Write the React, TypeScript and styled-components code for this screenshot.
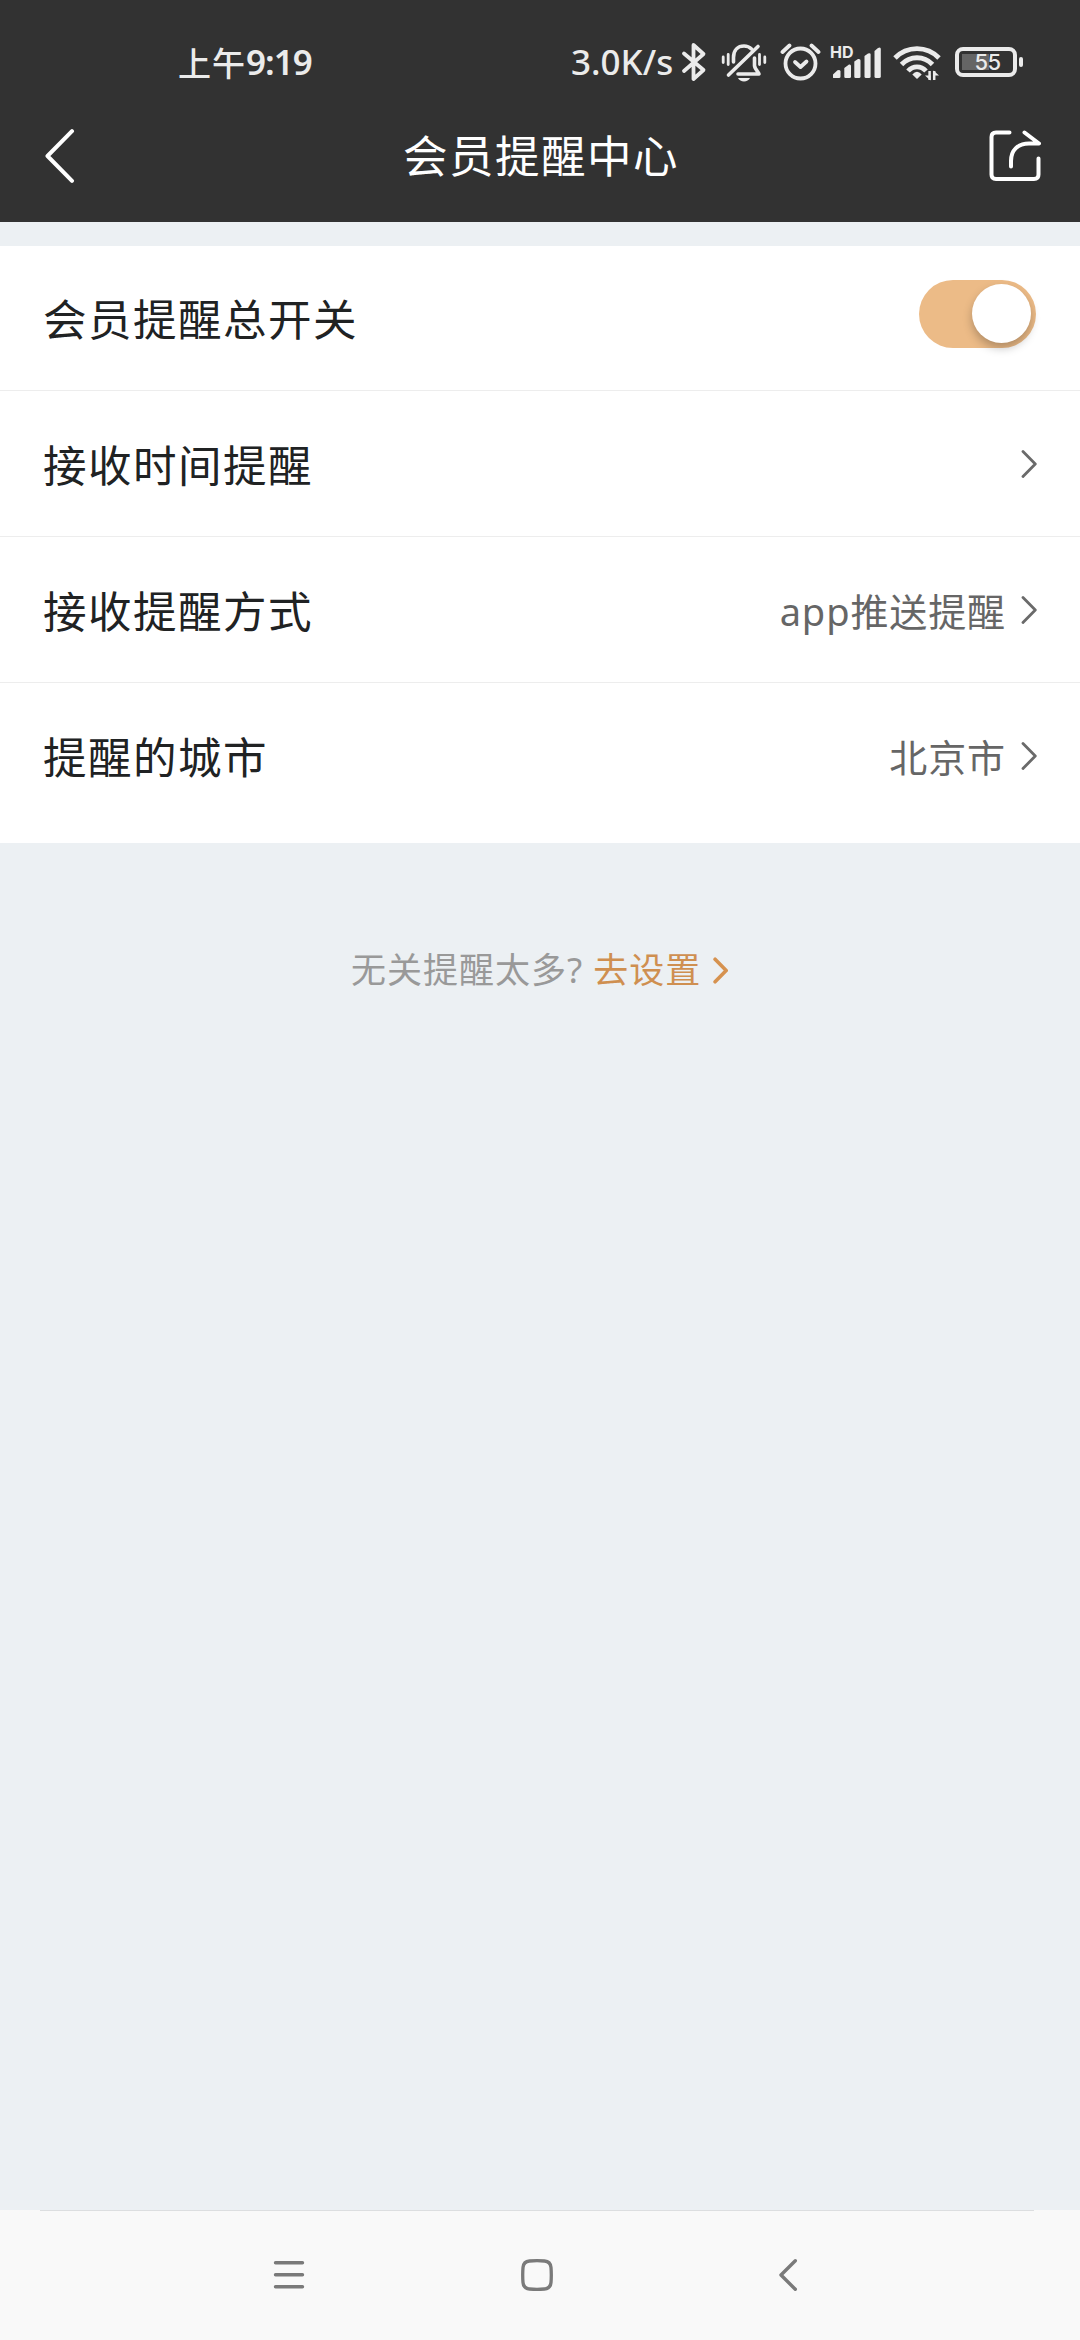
import React from "react";
import styled, { createGlobalStyle } from "styled-components";

const GlobalStyle = createGlobalStyle`
  *, *::before, *::after { box-sizing: border-box; }
  body { margin: 0; background: #ecf0f3; }
  svg { display: block; flex: none; }
  button { margin: 0; padding: 0; border: 0; background: none; font: inherit; color: inherit; }
`;

const Screen = styled.div`
  width: 1080px;
  height: 2340px;
  display: flex;
  flex-direction: column;
  overflow: hidden;
  background: #ecf0f3;
  font-family: "Noto Sans", "Noto Sans CJK SC", sans-serif;
  white-space: nowrap;
`;

const Header = styled.header`
  height: 222px;
  background: #323232;
  color: #fff;
`;

const StatusBar = styled.div`
  display: flex;
  align-items: center;
  justify-content: space-between;
  height: 90px;
  padding: 34px 57px 0 178px;
  color: #ebebeb;
  font-weight: 500;
  line-height: 56px;
`;

const Clock = styled.div`
  display: flex;
  font-size: 34px;
`;

const ClockPeriod = styled.span`
  font-family: "Noto Sans CJK SC", sans-serif;
  font-size: 33px;
  letter-spacing: 1px;
`;

const ClockTime = styled.span`
  font-family: "Noto Sans", sans-serif;
  font-size: 35px;
  font-weight: 600;
  letter-spacing: -1px;
`;

const StatusIcons = styled.div`
  display: flex;
  align-items: center;
`;

const Speed = styled.span`
  width: 110px;
  font-size: 35px;
  letter-spacing: 0;
`;

const Slot = styled.span<{ $after: number }>`
  margin-right: ${(p) => p.$after}px;
`;

const TitleBar = styled.div`
  display: grid;
  grid-template-columns: 120px 1fr 120px;
  align-items: center;
  height: 132px;
`;

const BackButton = styled.button`
  padding-left: 45px;
`;

const ShareButton = styled.button`
  display: flex;
  justify-content: flex-end;
  padding-right: 39px;
`;

const Title = styled.h1`
  margin: 0;
  padding-left: 2px;
  text-align: center;
  font-size: 44.5px;
  font-weight: 400;
  line-height: 60px;
  letter-spacing: 1.5px;
`;

const List = styled.main`
  margin-top: 24px;
  padding-bottom: 14px;
  background: #fff;
`;

const Row = styled.div<{ $height?: number }>`
  display: flex;
  align-items: center;
  height: ${(p) => p.$height ?? 146}px;
  padding: 0 43px;
  border-bottom: 1px solid #ededed;

  &:last-child { border-bottom-color: transparent; }
`;

const Label = styled.span`
  flex: 1;
  padding-top: 2px;
  color: #202223;
  font-size: 43.5px;
  line-height: 60px;
  letter-spacing: 1.5px;
`;

const Value = styled.span`
  padding-top: 3px;
  margin-right: 15px;
  color: #666;
  font-size: 38px;
  line-height: 56px;
  letter-spacing: 0.9px;
`;

const Toggle = styled.button`
  display: flex;
  justify-content: flex-end;
  align-items: center;
  width: 117px;
  height: 68px;
  margin: 0 1px 9px 0;
  padding-right: 5px;
  border-radius: 34px;
  background: #ecbb87;
`;

const Knob = styled.span`
  width: 59px;
  height: 59px;
  border-radius: 50%;
  background: #fff;
  box-shadow: 0 5px 10px rgba(0, 0, 0, 0.25);
`;

const Hint = styled.p`
  display: flex;
  align-items: center;
  margin: 99px 0 0;
  padding-left: 351px;
  color: #999;
  font-size: 35px;
  line-height: 56px;
  letter-spacing: 1px;
`;

const HintLink = styled.a`
  display: flex;
  align-items: center;
  gap: 12px;
  margin-left: 10px;
  color: #cf8f50;
`;

const NavBar = styled.nav`
  display: flex;
  flex-direction: column;
  height: 130px;
  margin-top: auto;
  background: #f9f9f9;
`;

const NavRule = styled.div`
  height: 1px;
  margin: 0 46px 0 40px;
  background: #dcdee0;
`;

const NavButtons = styled.div`
  display: flex;
  align-items: center;
  height: 128px;
  padding-left: 272px;
`;

const ArrowRight = ({ color = "#6a6a6a", width = 16, height = 30, weight = 2.8 }) => (
  <svg width={width} height={height} viewBox="0 0 16 30" fill="none" stroke={color} strokeWidth={weight} strokeLinecap="round" strokeLinejoin="round">
    <path d="M2 2.5 14.3 15 2 27.5" />
  </svg>
);

const Bluetooth = () => (
  <svg width="26" height="40" viewBox="0 0 26 40" fill="none" stroke="#ebebeb" strokeWidth="3.8" strokeLinecap="round" strokeLinejoin="round">
    <path d="M3 11.5 22.5 28 12.5 37V3L22.5 12 3 29" />
  </svg>
);

const MutedBell = () => (
  <svg width="46" height="40" viewBox="0 0 46 40" fill="none" stroke="#ebebeb" strokeWidth="3.6" strokeLinecap="round" strokeLinejoin="round">
    <path d="M12.5 20V15.5C12.5 8 17 4 23 4c3 0 5.500 1 7.500 3M37 4.500 7.500 33M33.500 16v7.500c0 3.500 5 7.500 4.500 8.500H17" />
    <path d="M2.200 15v5.500M7.200 12.500v10M38.500 12.500v10M43.800 15v5.500" strokeWidth="2.800" />
    <path d="M17 36h12c-2 4.500-10 4.500-12 0Z" fill="#ebebeb" stroke="none" />
  </svg>
);

const Alarm = () => (
  <svg width="42" height="40" viewBox="0 0 42 40" fill="none" stroke="#ebebeb" strokeWidth="3.800" strokeLinecap="round" strokeLinejoin="round">
    <circle cx="21.500" cy="21.500" r="15" />
    <path d="M16 20 21.500 25l6-5.500" />
    <path d="M3.500 10 10.500 3.500M32.500 3.500 39.500 10" />
  </svg>
);

const SignalBox = styled.span`
  position: relative;
  display: block;
`;

const HdMark = styled.span`
  position: absolute;
  left: -1px;
  top: 2px;
  font: 700 16px/16px "Inter", sans-serif;
`;

const Signal = () => (
  <SignalBox>
    <HdMark>HD</HdMark>
    <svg width="50" height="40" viewBox="0 0 50 40" fill="#ebebeb">
      <path d="M2 35.500V32.500L6.500 28.200Q9.500 27.200 9.500 29.500V34.500Q9.500 36 8 36H3Q2 36 2 35.500Z" />
      <path d="M13.300 26 18 22.500Q20 22 20 24V34.500Q20 36 18.500 36H14.500Q13.300 36 13.300 34.500Z" />
      <path d="M23.300 19.500 27 17Q29.500 16.500 29.500 18.500V34.500Q29.500 36 28 36H24.500Q23.300 36 23.300 34.500Z" />
      <path d="M33.500 14 37 11.500Q39.600 10.500 39.600 12.500V34.500Q39.600 36 38 36H35Q33.500 36 33.500 34.500Z" />
      <path d="M43.500 9 47 6Q49.800 4.500 49.800 7V34.500Q49.800 36 48 36H45Q43.500 36 43.500 34.500Z" />
    </svg>
  </SignalBox>
);

const Wifi = () => (
  <svg width="48" height="40" viewBox="0 0 48 40" fill="none" stroke="#ebebeb" strokeWidth="4.800">
    <path d="M2 16C14 3.500 34 3.500 46 16M8.500 22.500C17 13.500 31 13.500 39.500 22.500M15 29C20 23.500 28 23.500 33 29" />
    <path d="M19.300 32.500Q24 27 28.700 32.500L24 37Z" fill="#ebebeb" stroke="none" />
    <path d="M36.600 29v9M41.200 38v-9" strokeWidth="2.500" />
    <path d="M32 33.500h5.500V38.500ZM46 33.500h-5.500V28.500Z" fill="#ebebeb" stroke="none" />
  </svg>
);

const BatteryBox = styled.span`
  display: flex;
  align-items: center;
  gap: 2px;
`;

const BatteryCell = styled.span`
  display: flex;
  align-items: center;
  justify-content: center;
  width: 62px;
  height: 30px;
  border: 4px solid #ebebeb;
  border-radius: 8px;
  background: linear-gradient(#656565, #656565) 3px 3px / 27px 16px no-repeat;
  font: 500 22px/22px "Inter", sans-serif;
  letter-spacing: -0.5px;
  padding-left: 3px;
`;

const BatteryTip = styled.span`
  width: 4px;
  height: 10px;
  border-radius: 2px;
  background: #ebebeb;
`;

const settings = [
  { label: "接收时间提醒", value: "" },
  { label: "接收提醒方式", value: "app推送提醒" },
  { label: "提醒的城市", value: "北京市" },
];

export default function App() {
  return (
    <Screen lang="zh-CN">
      <GlobalStyle />
      <Header>
        <StatusBar>
          <Clock>
            <ClockPeriod>上午</ClockPeriod>
            <ClockTime>9:19</ClockTime>
          </Clock>
          <StatusIcons>
            <Speed>3.0K/s</Speed>
            <Slot $after={14}><Bluetooth /></Slot>
            <Slot $after={12}><MutedBell /></Slot>
            <Slot $after={10}><Alarm /></Slot>
            <Slot $after={12}><Signal /></Slot>
            <Slot $after={14}><Wifi /></Slot>
            <BatteryBox>
              <BatteryCell>55</BatteryCell>
              <BatteryTip />
            </BatteryBox>
          </StatusIcons>
        </StatusBar>
        <TitleBar>
          <BackButton aria-label="返回">
            <svg width="30" height="54" viewBox="0 0 30 54" fill="none" stroke="#fff" strokeWidth="4" strokeLinecap="round" strokeLinejoin="round">
              <path d="M27 2.200 2.500 27 27 51.800" />
            </svg>
          </BackButton>
          <Title>会员提醒中心</Title>
          <ShareButton aria-label="分享">
            <svg width="52" height="52" viewBox="0 0 52 52" fill="none" stroke="#fff" strokeWidth="4" strokeLinecap="round" strokeLinejoin="round">
              <path d="M20.500 2.500H7Q2.500 2.500 2.500 7V44.500Q2.500 49 7 49H45Q49.500 49 49.500 44.500V28.500" />
              <path d="M35.500 2.500 50 13.500H40C29 13.500 22 20 22 31V36.500" />
            </svg>
          </ShareButton>
        </TitleBar>
      </Header>
      <List>
        <Row $height={145}>
          <Label>会员提醒总开关</Label>
          <Toggle role="switch" aria-checked="true"><Knob /></Toggle>
        </Row>
        {settings.map((s) => (
          <Row key={s.label}>
            <Label>{s.label}</Label>
            {s.value && <Value>{s.value}</Value>}
            <ArrowRight />
          </Row>
        ))}
      </List>
      <Hint>
        无关提醒太多?
        <HintLink>
          去设置
          <ArrowRight color="#d6924f" width={15} height={27} weight={4} />
        </HintLink>
      </Hint>
      <NavBar>
        <NavRule />
        <NavButtons>
          <Slot $after={215}>
            <svg width="34" height="34" viewBox="0 0 34 34" stroke="#7a7a7a" strokeWidth="3.400" strokeLinecap="round">
              <path d="M3.500 4.800H30.500M3.500 16.800H30.500M3.500 28.800H30.500" />
            </svg>
          </Slot>
          <Slot $after={225}>
            <svg width="32" height="32" viewBox="0 0 32 32" fill="none" stroke="#7a7a7a" strokeWidth="3.300">
              <path d="M8.500 2Q16 1.400 23.500 2Q29.500 2.500 30 8.500Q30.600 16 30 23.500Q29.500 29.500 23.500 30Q16 30.600 8.500 30Q2.500 29.500 2 23.500Q1.400 16 2 8.500Q2.500 2.500 8.500 2Z" />
            </svg>
          </Slot>
          <svg width="20" height="34" viewBox="0 0 20 34" fill="none" stroke="#7a7a7a" strokeWidth="3.400" strokeLinecap="round" strokeLinejoin="round">
            <path d="M17.300 2.700 3 17 17.300 31.300" />
          </svg>
        </NavButtons>
      </NavBar>
    </Screen>
  );
}
